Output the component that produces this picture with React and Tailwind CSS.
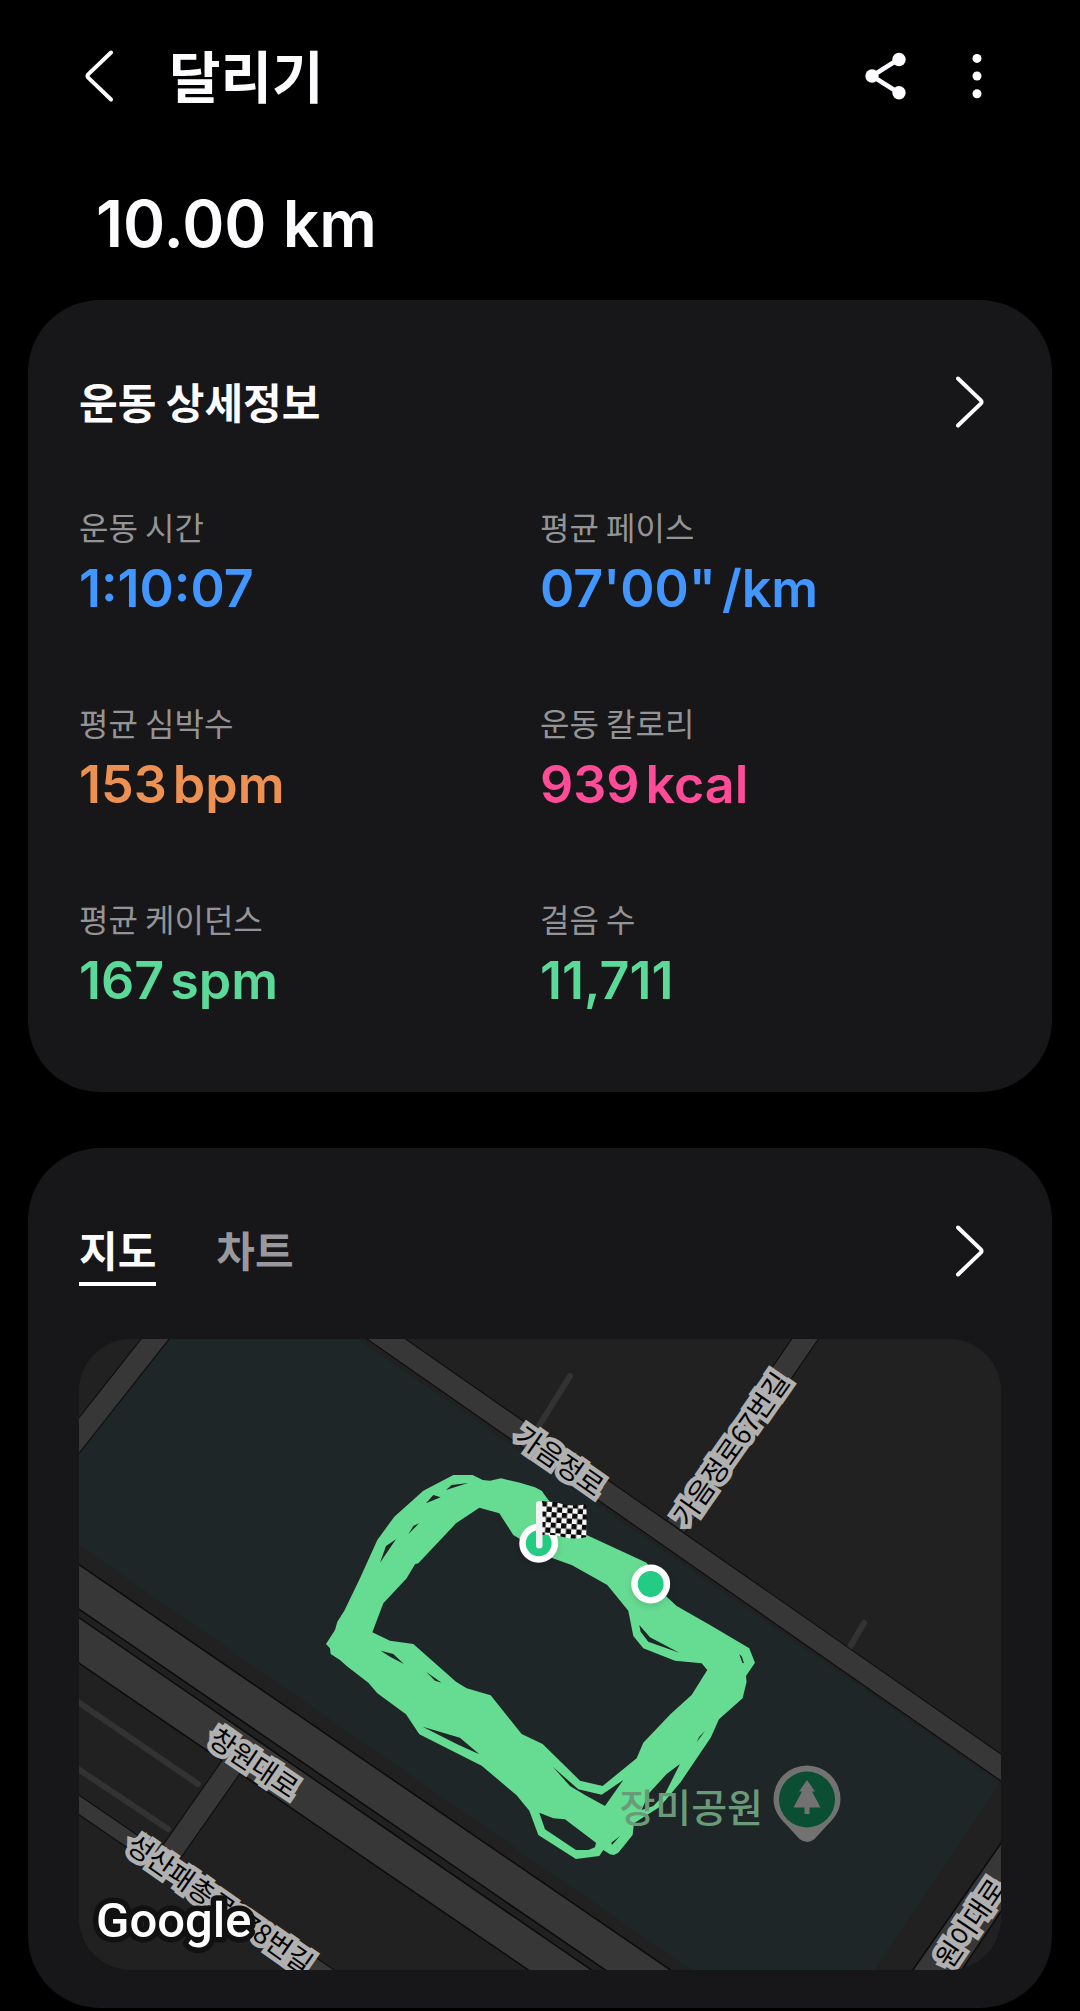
import { useState } from 'react'

const stats = [
    { label: '운동 시간', value: '1:10:07', unit: '', color: 'text-[#4296ff]' },
    { label: '평균 페이스', value: '07\'00"', unit: '/km', color: 'text-[#4296ff]' },
    { label: '평균 심박수', value: '153', unit: 'bpm', color: 'text-[#ec9152]' },
    { label: '운동 칼로리', value: '939', unit: 'kcal', color: 'text-[#ff4b98]' },
    { label: '평균 케이던스', value: '167', unit: 'spm', color: 'text-[#5bd998]' },
    { label: '걸음 수', value: '11,711', unit: '', color: 'text-[#5bd998]' },
]

const roadLabels = [
    { text: '가음정로', x: 560, y: 1461, angle: 35 },
    { text: '가음정로67번길', x: 731, y: 1449, angle: -55 },
    { text: '창원대로', x: 254, y: 1763, angle: 34 },
    { text: '성산패총로178번길', x: 220, y: 1904, angle: 35 },
    { text: '원이대로', x: 970, y: 1923, angle: -56 },
]

// Contorno exterior, hueco interior y los pequeños huecos entre vueltas
const track = [
    'M78 612 105 570 112 545 133 512 180 415 232 300 283 230 370 152 460 105 518 105 548 120 570 122 603 115 660 128 705 142 725 152 745 180 860 285 1040 368 1100 470 1130 498 1230 555 1348 625 1365 668 1338 708 1340 725 1328 775 1257 838 1233 892 1143 1025 1080 1100 1002 1150 998 1185 955 1238 942 1245 930 1243 910 1230 898 1248 828 1257 715 1185 688 1112 650 1066 545 977 358 883 318 823 232 760 205 728 140 678 120 660 92 642 90 625Z',
    'M217 577 250 490 320 415 345 373 355 370 468 250 538 203 598 220 640 285 665 300 750 352 815 375 922 435 985 512 1000 588 1030 625 1125 662 1205 670 1222 690 1175 765 1112 822 1030 908 1010 955 908 1038 840 1022 728 912 665 882 572 766 500 745 468 725 340 612 270 602Z',
    'M240 368 258 318 288 298Z',
    'M325 283 340 258 357 250Z',
    'M378 190 400 165 422 172Z',
    'M438 150 455 135 505 129 485 135Z',
    'M1018 555 1050 592 1138 638 1045 605 1022 575Z',
    'M242 632 280 642 312 672 270 650Z',
    'M378 695 425 728 405 722Z',
    'M368 860 480 893 538 943 470 912Z',
    'M758 980 835 1048 905 1064 970 1020 915 1098 855 1065 810 1038Z',
    'M1140 972 1095 1062 1060 1098 1025 1110 1047 1060 1100 1002Z',
    'M718 1118 760 1135 795 1138 888 1208 885 1222 865 1230 828 1230 735 1168Z',
    'M960 1188 936 1215 934 1208Z',
    'M1190 907 1198 890 1215 873Z',
    'M1318 642 1326 650 1332 670 1327 668Z',
].join(' ')

const Chevron = ({ left }) => (
    <svg
        width="28"
        height="52"
        viewBox="0 0 28 52"
        fill="none"
        stroke="white"
        strokeWidth="4"
        strokeLinecap="round"
        strokeLinejoin="round"
        aria-hidden="true"
    >
        {left ? <path d="M26 2.5 3.2 24.4Q1.8 26 3.2 27.6L26 49.5" /> : <path d="M2 2.5 24.8 24.4Q26.2 26 24.8 27.6L2 49.5" />}
    </svg>
)

const Header = () => (
    <header className="flex h-[152px] items-center justify-between px-[85px]">
        <div className="flex items-center gap-14">
            <button type="button" aria-label="뒤로">
                <Chevron left />
            </button>
            <h1 className="pb-1 text-[56px] font-bold leading-[72px]">달리기</h1>
        </div>
        <div className="flex items-center gap-15">
            <button type="button" aria-label="공유">
                <svg width="42" height="48" viewBox="0 0 42 48" fill="#fafaff" aria-hidden="true">
                    <path d="M34 7 7 24l27 17" fill="none" stroke="#fafaff" strokeWidth="4.6" />
                    <circle cx="34" cy="7.5" r="6.7" />
                    <circle cx="7" cy="24" r="6.7" />
                    <circle cx="34" cy="40.7" r="6.7" />
                </svg>
            </button>
            <button type="button" aria-label="더보기">
                <svg width="28" height="48" viewBox="0 0 28 48" fill="white" aria-hidden="true">
                    <circle cx="10" cy="6.4" r="4.5" />
                    <circle cx="10" cy="24" r="4.5" />
                    <circle cx="10" cy="41.8" r="4.5" />
                </svg>
            </button>
        </div>
    </header>
)

const Flag = () => (
    <g>
        <clipPath id="flag">
            <path d="M542 1501Q553 1501 562 1504Q574 1507 586.500 1504V1537Q575 1540 563 1537Q553 1534 542 1535Z" />
        </clipPath>
        <pattern id="checker" width="10.400" height="10.400" patternUnits="userSpaceOnUse" x="542" y="1501" patternTransform="rotate(4 542 1501)">
            <rect width="10.400" height="10.400" fill="#f5f5f5" />
            <rect width="5.200" height="5.200" fill="#0a0a0a" />
            <rect x="5.200" y="5.200" width="5.200" height="5.200" fill="#0a0a0a" />
        </pattern>
        <rect x="540" y="1498" width="50" height="44" fill="url(#checker)" clipPath="url(#flag)" />
        <rect x="536" y="1501" width="6.500" height="47.500" rx="3" fill="#f2f2f2" />
    </g>
)

const RunMap = () => (
    <svg viewBox="79 1339 922 631" className="block h-auto w-full rounded-[52px]" role="img" aria-label="지도">
        <rect x="79" y="1339" width="922" height="631" fill="#212121" />
        <path d="M79 1450 170 1339H358L1000 1783 874 1970H691L79 1545Z" fill="#1e2627" />

        {/* Calles secundarias */}
        <g stroke="#333333" strokeWidth="6" strokeLinecap="round">
            <path d="M570 1376 534 1434" />
            <path d="M864 1623 847 1652" />
            <path d="M75 1700 198 1784" />
            <path d="M75 1767 168 1829" />
        </g>

        {/* Calles principales: primero el borde, luego el relleno */}
        <g fill="none" stroke="#0b0b0b" strokeWidth="23">
            <path d="M163 1329 70 1447" />
            <path d="M372 1329 1016 1778" />
            <path d="M812 1329 676 1526" />
            <path d="M238 1757 168 1857" />
            <path d="M66 1796 336 1981" strokeWidth="17" />
        </g>
        <g fill="#373737" stroke="#0b0b0b" strokeWidth="1.500">
            <path d="M70 1558.500 685 1980H620L70 1603Z" />
            <path d="M70 1611.500 606 1980H543L70 1657Z" />
            <path d="M1008 1833 906 1980H955L1008 1901Z" />
        </g>
        <g fill="none" stroke="#373737" strokeWidth="21">
            <path d="M163 1329 70 1447" />
            <path d="M372 1329 1016 1778" />
            <path d="M812 1329 676 1526" />
            <path d="M238 1757 168 1857" />
            <path d="M66 1796 336 1981" strokeWidth="15" />
        </g>

        <path d={track} transform="translate(300 1440) scale(0.3333)" fill="#66db92" fillRule="evenodd" />

        <text x="763" y="1822" textAnchor="end" className="fill-[#6b9a79] text-[39px] font-medium">장미공원</text>
        <path d="M807 1765.500a33.500 33.500 0 0 1 33.500 33.500c0 13-8 21-15 28l-11 12q-7 6-15 0l-11-12c-7-7-15-15-15-28a33.500 33.500 0 0 1 33.500-33.500Z" fill="#727272" />
        <circle cx="807" cy="1799.500" r="28" fill="#0a4e33" />
        <path d="M807 1780 799 1791.500H802L793.500 1807.500H804.500V1814H809.500V1807.500H820.500L812 1791.500H815Z" fill="#727272" />

        {roadLabels.map((road) => (
            <text
                key={road.text}
                x={road.x}
                y={road.y}
                dy="10"
                textAnchor="middle"
                transform={`rotate(${road.angle} ${road.x} ${road.y})`}
                stroke="#b0b0b0"
                strokeWidth="9"
                paintOrder="stroke"
                className="fill-black text-[27px]"
            >
                {road.text}
            </text>
        ))}

        <g className="drop-shadow-md" fill="#24cb82" stroke="white" strokeWidth="6.500">
            <circle cx="538.700" cy="1543.300" r="16.200" />
            <circle cx="650.700" cy="1584" r="16.200" />
        </g>
        <Flag />

        <text
            x="96"
            y="1937"
            stroke="#111111"
            strokeWidth="11"
            strokeLinejoin="round"
            paintOrder="stroke"
            className="fill-white font-['Roboto',sans-serif] text-[49px] font-medium"
        >
            Google
        </text>
    </svg>
)

const App = () => {
    const [tab, setTab] = useState('지도')

    return (
        <div className="min-h-screen bg-black font-['Noto_Sans_CJK_KR',sans-serif] text-[#fcfcff]">
            <Header />
            <p className="mt-8 px-24 pb-9 font-['Inter',sans-serif] text-[64px] font-semibold leading-[80px]">10.00 km</p>

            <main className="flex flex-col gap-14 px-7">
                <section className="rounded-[72px] bg-[#171719] px-[51px] pb-[78px] pt-18">
                    <div className="flex h-[60px] items-center justify-between pr-[17px]">
                        <h2 className="pb-1 text-[42px] font-bold">운동 상세정보</h2>
                        <button type="button" aria-label="운동 상세정보 보기">
                            <Chevron />
                        </button>
                    </div>
                    <dl className="mt-19 grid grid-cols-2 gap-y-[82px]">
                        {stats.map((stat) => (
                            <div key={stat.label}>
                                <dt className="text-[32px] leading-[36px] text-[#949497]">{stat.label}</dt>
                                <dd className={`mt-3 flex gap-1.5 font-['Inter',sans-serif] text-[52px] font-semibold leading-[66px] ${stat.color}`}>
                                    <span>{stat.value}</span>
                                    {stat.unit && <span>{stat.unit}</span>}
                                </dd>
                            </div>
                        ))}
                    </dl>
                </section>

                <section className="rounded-[72px] bg-[#171719] px-[51px] pb-[38px] pt-18">
                    <div className="flex items-start justify-between pr-[17px]">
                        <div className="flex gap-15" role="tablist">
                            {['지도', '차트'].map((name) => (
                                <button
                                    key={name}
                                    type="button"
                                    role="tab"
                                    aria-selected={tab === name}
                                    onClick={() => setTab(name)}
                                    className={`h-[66px] border-b-4 pb-1 text-[42px] font-bold leading-[58px] ${
                                        tab === name ? 'border-white' : 'border-transparent text-[#98989d]'
                                    }`}
                                >
                                    {name}
                                </button>
                            ))}
                        </div>
                        <button type="button" aria-label="지도 크게 보기" className="flex h-[62px] items-center">
                            <Chevron />
                        </button>
                    </div>
                    <div className="mt-[53px]">
                        <RunMap />
                    </div>
                </section>
            </main>
        </div>
    )
}
export default App
